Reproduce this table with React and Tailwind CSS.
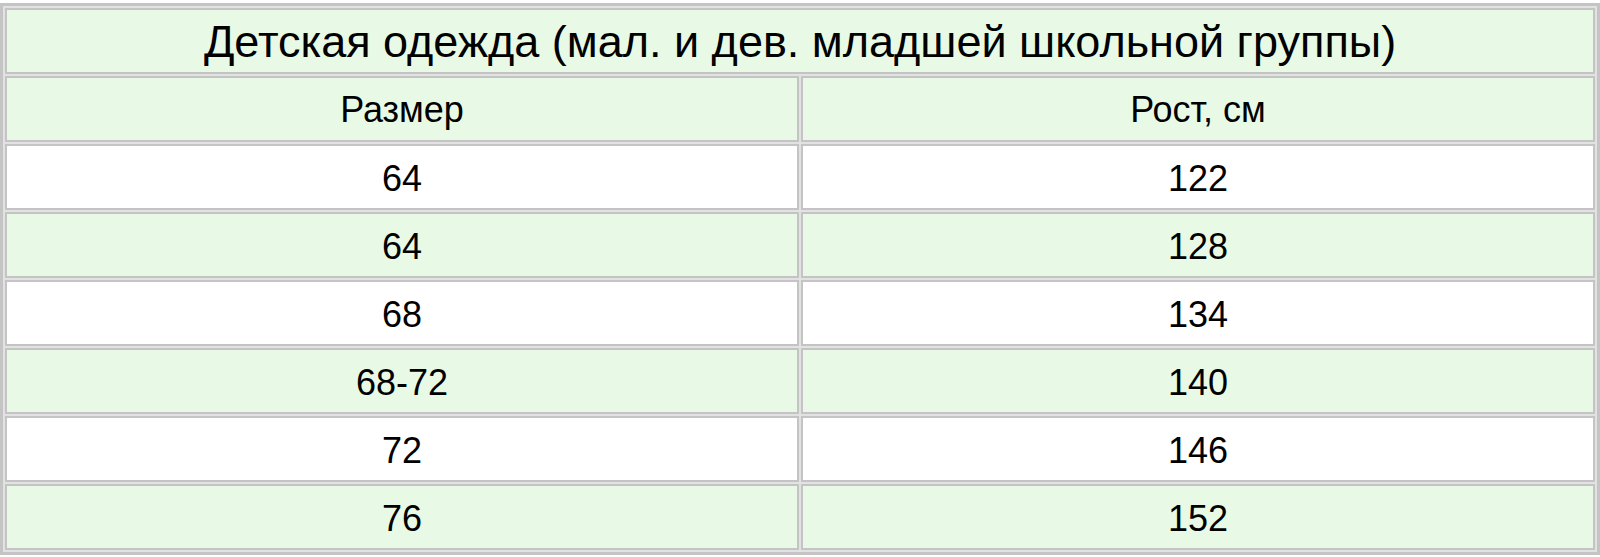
const rows = [
  ['64', '122'],
  ['64', '128'],
  ['68', '134'],
  ['68-72', '140'],
  ['72', '146'],
  ['76', '152'],
];

export default function App() {
  return (
    <div className="w-[1600px] h-[557px] bg-white pt-[3px] overflow-hidden" style={{ fontFamily: '"Liberation Sans", Arial, sans-serif' }}>
      <table className="w-full table-fixed border-separate border-spacing-[2px] border-[3px] border-[#c4c4c4] bg-[#e2e2e2] text-black">
        <tbody>
          {/* Title */}
          <tr>
            <td colSpan={2} className="h-[66px] border-2 border-[#c4c4c4] bg-[#e8fae6] text-center text-[45px] leading-none">
              Детская одежда (мал. и дев. младшей школьной группы)
            </td>
          </tr>
          {/* Column headers */}
          <tr>
            <td className="h-[66px] pt-[2px] border-2 border-[#c4c4c4] bg-[#e8fae6] text-center text-[36px] leading-none">Размер</td>
            <td className="h-[66px] pt-[2px] border-2 border-[#c4c4c4] bg-[#e8fae6] text-center text-[36px] leading-none">Рост, см</td>
          </tr>
          {rows.map((r, i) => (
            <tr key={i}>
              <td className={`h-[66px] pt-[3px] border-2 border-[#c4c4c4] text-center text-[36px] leading-none ${i % 2 === 0 ? 'bg-white' : 'bg-[#e8fae6]'}`}>{r[0]}</td>
              <td className={`h-[66px] pt-[3px] border-2 border-[#c4c4c4] text-center text-[36px] leading-none ${i % 2 === 0 ? 'bg-white' : 'bg-[#e8fae6]'}`}>{r[1]}</td>
            </tr>
          ))}
        </tbody>
      </table>
    </div>
  );
}
